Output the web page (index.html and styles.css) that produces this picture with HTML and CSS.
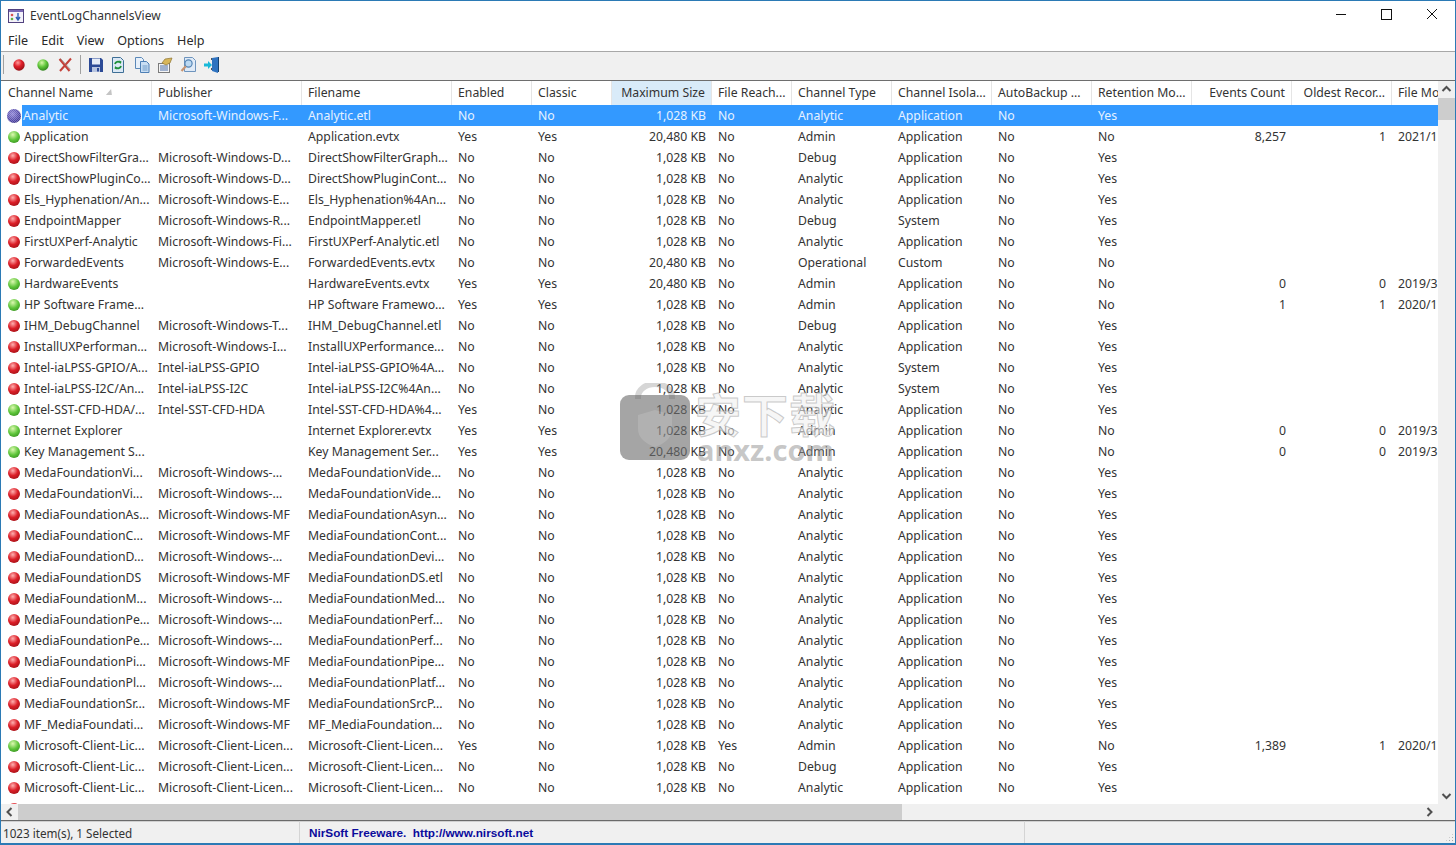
FILE: index.html
```html
<!DOCTYPE html>
<html lang="en">
<head>
<meta charset="utf-8">
<title>EventLogChannelsView</title>
<link rel="stylesheet" href="styles.css">
</head>
<body>
<div class="window">
  <header class="titlebar">
    <svg class="appicon" width="16" height="14" viewBox="0 0 16 14"><rect x="0.5" y="0.5" width="15" height="13" fill="#f4f2fa" stroke="#51427f"/><rect x="1" y="1" width="14" height="2" fill="#7a68b5"/><circle cx="4" cy="6" r="1.3" fill="#d9534f"/><circle cx="4" cy="10" r="1.3" fill="#65b045"/><path d="M10 4v6M8 8l2 3 2-3" fill="none" stroke="#2f5fb3" stroke-width="1.4"/></svg>
    <span class="apptitle">EventLogChannelsView</span>
    <div class="wincontrols">
      <svg width="46" height="30" viewBox="0 0 46 30"><path d="M19 14.5h10" stroke="#111" fill="none"/></svg>
      <svg width="46" height="30" viewBox="0 0 46 30"><rect x="18.5" y="9.5" width="10" height="10" stroke="#111" fill="none"/></svg>
      <svg width="46" height="30" viewBox="0 0 46 30"><path d="M18 9l10 10M28 9L18 19" stroke="#111" fill="none"/></svg>
    </div>
  </header>
  <nav class="menubar"><span>File</span><span>Edit</span><span>View</span><span>Options</span><span>Help</span></nav>
  <div class="toolbar">
    <i class="tsep first"></i>
    <svg class="tool m8" width="16" height="16" viewBox="0 0 16 16"><defs><radialGradient id="tr" cx="40%" cy="30%" r="75%"><stop offset="0" stop-color="#ff9a9a"/><stop offset=".45" stop-color="#e0202a"/><stop offset="1" stop-color="#8e0c12"/></radialGradient><radialGradient id="tg" cx="40%" cy="30%" r="75%"><stop offset="0" stop-color="#d6f7a8"/><stop offset=".5" stop-color="#5fc63a"/><stop offset="1" stop-color="#2c7d1a"/></radialGradient></defs><circle cx="8" cy="8" r="5.7" fill="url(#tr)"/></svg>
    <svg class="tool m6" width="16" height="16" viewBox="0 0 16 16"><circle cx="8" cy="8" r="5.7" fill="url(#tg)"/></svg>
    <svg class="tool m0" width="16" height="16" viewBox="0 0 16 16"><path d="M2.500 2l10 12M14 1.500L3 14" stroke="#c4413a" stroke-width="2" fill="none"/><path d="M3.500 1.500l10 11" stroke="#8f7f7a" stroke-width=".7" fill="none"/></svg>
    <i class="tsep"></i>
    <svg class="tool m6" width="16" height="16" viewBox="0 0 16 16"><path d="M1 1h12l2 2v12H1z" fill="#2c4a96"/><rect x="4" y="1.500" width="8" height="6" fill="#e6ecf7"/><rect x="4" y="10" width="8" height="5" fill="#b8c5e0"/><rect x="9" y="11" width="2" height="3.500" fill="#2c4a96"/></svg>
    <svg class="tool m8" width="16" height="16" viewBox="0 0 16 16"><path d="M2.500 .5h8l3 3v12h-11z" fill="#dbe8f5" stroke="#3e6f96"/><path d="M5 7a3 3 0 0 1 5-1.500M11 9a3 3 0 0 1-5 1.500" fill="none" stroke="#1e8f38" stroke-width="1.800"/><path d="M9 3.500l2.500 1-.8 2.700zM7 12.500l-2.500-1 .8-2.700z" fill="#1e8f38"/></svg>
    <svg class="tool" width="16" height="16" viewBox="0 0 16 16"><path d="M1.500 .5h6l2 2v9h-8z" fill="#e7f0fa" stroke="#5b88b8"/><path d="M6.500 4.500h6l2.500 2.500v8.500H6.500z" fill="#c9def3" stroke="#4d7fb5"/><path d="M8.500 9h5M8.500 11h5M8.500 13h5" stroke="#6f9bc8"/></svg>
    <svg class="tool" width="16" height="16" viewBox="0 0 16 16"><rect x="1.500" y="6.500" width="11" height="9" fill="#f4f4f4" stroke="#7b7b7b"/><path d="M3 9h8M3 11h8M3 13h8" stroke="#4d6fa8"/><path d="M5 6l3-4 7-1-2 5-4 2z" fill="#d7b65a" stroke="#8e7430" stroke-width=".7"/></svg>
    <svg class="tool m8" width="16" height="16" viewBox="0 0 16 16"><path d="M4.500 .5h8l3 3v11h-11z" fill="#dfeaf7" stroke="#6e94bd"/><circle cx="8.500" cy="6.500" r="3.600" fill="#bcd9f2" stroke="#5585b5" stroke-width="1.200"/><path d="M5.800 9.300L1.500 14" stroke="#c89572" stroke-width="2.200"/></svg>
    <svg class="tool" width="16" height="16" viewBox="0 0 16 16"><path d="M8 1l6-1v16l-6-2z" fill="#2f73c0"/><path d="M14 0h1v15h-1z" fill="#16416f"/><path d="M8 1h-1v2h1zM7 11h1v2H7z" fill="#555"/><path d="M0 6.500h4V4l4 4-4 4V9.500H0z" fill="#18b8d8"/></svg>
  </div>
  <main class="listarea">
    <div class="listview">
      <table class="grid">
        <colgroup><col class="w150"><col class="w150"><col class="w150"><col class="w80"><col class="w80"><col class="w100"><col class="w80"><col class="w100"><col class="w100"><col class="w100"><col class="w100"><col class="w100"><col class="w100"><col class="w100"></colgroup>
        <thead><tr><th class="namehead">Channel Name<span class="sortmark"></span></th><th>Publisher</th><th>Filename</th><th>Enabled</th><th>Classic</th><th class="num sorted">Maximum Size</th><th>File Reach...</th><th>Channel Type</th><th>Channel Isola...</th><th>AutoBackup ...</th><th>Retention Mo...</th><th class="num">Events Count</th><th class="num">Oldest Recor...</th><th>File Modified</th></tr></thead>
        <tbody>
<tr class="sel"><td><div class="name"><b class="dot blue"></b><span>Analytic</span></div></td><td>Microsoft-Windows-F...</td><td>Analytic.etl</td><td>No</td><td>No</td><td class="num">1,028 KB</td><td>No</td><td>Analytic</td><td>Application</td><td>No</td><td>Yes</td><td class="num"></td><td class="num"></td><td></td></tr>
<tr><td><div class="name"><b class="dot green"></b><span>Application</span></div></td><td></td><td>Application.evtx</td><td>Yes</td><td>Yes</td><td class="num">20,480 KB</td><td>No</td><td>Admin</td><td>Application</td><td>No</td><td>No</td><td class="num">8,257</td><td class="num">1</td><td>2021/1</td></tr>
<tr><td><div class="name"><b class="dot red"></b><span>DirectShowFilterGra...</span></div></td><td>Microsoft-Windows-D...</td><td>DirectShowFilterGraph...</td><td>No</td><td>No</td><td class="num">1,028 KB</td><td>No</td><td>Debug</td><td>Application</td><td>No</td><td>Yes</td><td class="num"></td><td class="num"></td><td></td></tr>
<tr><td><div class="name"><b class="dot red"></b><span>DirectShowPluginCo...</span></div></td><td>Microsoft-Windows-D...</td><td>DirectShowPluginCont...</td><td>No</td><td>No</td><td class="num">1,028 KB</td><td>No</td><td>Analytic</td><td>Application</td><td>No</td><td>Yes</td><td class="num"></td><td class="num"></td><td></td></tr>
<tr><td><div class="name"><b class="dot red"></b><span>Els_Hyphenation/An...</span></div></td><td>Microsoft-Windows-E...</td><td>Els_Hyphenation%4An...</td><td>No</td><td>No</td><td class="num">1,028 KB</td><td>No</td><td>Analytic</td><td>Application</td><td>No</td><td>Yes</td><td class="num"></td><td class="num"></td><td></td></tr>
<tr><td><div class="name"><b class="dot red"></b><span>EndpointMapper</span></div></td><td>Microsoft-Windows-R...</td><td>EndpointMapper.etl</td><td>No</td><td>No</td><td class="num">1,028 KB</td><td>No</td><td>Debug</td><td>System</td><td>No</td><td>Yes</td><td class="num"></td><td class="num"></td><td></td></tr>
<tr><td><div class="name"><b class="dot red"></b><span>FirstUXPerf-Analytic</span></div></td><td>Microsoft-Windows-Fi...</td><td>FirstUXPerf-Analytic.etl</td><td>No</td><td>No</td><td class="num">1,028 KB</td><td>No</td><td>Analytic</td><td>Application</td><td>No</td><td>Yes</td><td class="num"></td><td class="num"></td><td></td></tr>
<tr><td><div class="name"><b class="dot red"></b><span>ForwardedEvents</span></div></td><td>Microsoft-Windows-E...</td><td>ForwardedEvents.evtx</td><td>No</td><td>No</td><td class="num">20,480 KB</td><td>No</td><td>Operational</td><td>Custom</td><td>No</td><td>No</td><td class="num"></td><td class="num"></td><td></td></tr>
<tr><td><div class="name"><b class="dot green"></b><span>HardwareEvents</span></div></td><td></td><td>HardwareEvents.evtx</td><td>Yes</td><td>Yes</td><td class="num">20,480 KB</td><td>No</td><td>Admin</td><td>Application</td><td>No</td><td>No</td><td class="num">0</td><td class="num">0</td><td>2019/3</td></tr>
<tr><td><div class="name"><b class="dot green"></b><span>HP Software Frame...</span></div></td><td></td><td>HP Software Framewo...</td><td>Yes</td><td>Yes</td><td class="num">1,028 KB</td><td>No</td><td>Admin</td><td>Application</td><td>No</td><td>No</td><td class="num">1</td><td class="num">1</td><td>2020/1</td></tr>
<tr><td><div class="name"><b class="dot red"></b><span>IHM_DebugChannel</span></div></td><td>Microsoft-Windows-T...</td><td>IHM_DebugChannel.etl</td><td>No</td><td>No</td><td class="num">1,028 KB</td><td>No</td><td>Debug</td><td>Application</td><td>No</td><td>Yes</td><td class="num"></td><td class="num"></td><td></td></tr>
<tr><td><div class="name"><b class="dot red"></b><span>InstallUXPerforman...</span></div></td><td>Microsoft-Windows-I...</td><td>InstallUXPerformance...</td><td>No</td><td>No</td><td class="num">1,028 KB</td><td>No</td><td>Analytic</td><td>Application</td><td>No</td><td>Yes</td><td class="num"></td><td class="num"></td><td></td></tr>
<tr><td><div class="name"><b class="dot red"></b><span>Intel-iaLPSS-GPIO/A...</span></div></td><td>Intel-iaLPSS-GPIO</td><td>Intel-iaLPSS-GPIO%4A...</td><td>No</td><td>No</td><td class="num">1,028 KB</td><td>No</td><td>Analytic</td><td>System</td><td>No</td><td>Yes</td><td class="num"></td><td class="num"></td><td></td></tr>
<tr><td><div class="name"><b class="dot red"></b><span>Intel-iaLPSS-I2C/An...</span></div></td><td>Intel-iaLPSS-I2C</td><td>Intel-iaLPSS-I2C%4An...</td><td>No</td><td>No</td><td class="num">1,028 KB</td><td>No</td><td>Analytic</td><td>System</td><td>No</td><td>Yes</td><td class="num"></td><td class="num"></td><td></td></tr>
<tr><td><div class="name"><b class="dot green"></b><span>Intel-SST-CFD-HDA/...</span></div></td><td>Intel-SST-CFD-HDA</td><td>Intel-SST-CFD-HDA%4...</td><td>Yes</td><td>No</td><td class="num">1,028 KB</td><td>No</td><td>Analytic</td><td>Application</td><td>No</td><td>Yes</td><td class="num"></td><td class="num"></td><td></td></tr>
<tr><td><div class="name"><b class="dot green"></b><span>Internet Explorer</span></div></td><td></td><td>Internet Explorer.evtx</td><td>Yes</td><td>Yes</td><td class="num">1,028 KB</td><td>No</td><td>Admin</td><td>Application</td><td>No</td><td>No</td><td class="num">0</td><td class="num">0</td><td>2019/3</td></tr>
<tr><td><div class="name"><b class="dot green"></b><span>Key Management S...</span></div></td><td></td><td>Key Management Ser...</td><td>Yes</td><td>Yes</td><td class="num">20,480 KB</td><td>No</td><td>Admin</td><td>Application</td><td>No</td><td>No</td><td class="num">0</td><td class="num">0</td><td>2019/3</td></tr>
<tr><td><div class="name"><b class="dot red"></b><span>MedaFoundationVi...</span></div></td><td>Microsoft-Windows-...</td><td>MedaFoundationVide...</td><td>No</td><td>No</td><td class="num">1,028 KB</td><td>No</td><td>Analytic</td><td>Application</td><td>No</td><td>Yes</td><td class="num"></td><td class="num"></td><td></td></tr>
<tr><td><div class="name"><b class="dot red"></b><span>MedaFoundationVi...</span></div></td><td>Microsoft-Windows-...</td><td>MedaFoundationVide...</td><td>No</td><td>No</td><td class="num">1,028 KB</td><td>No</td><td>Analytic</td><td>Application</td><td>No</td><td>Yes</td><td class="num"></td><td class="num"></td><td></td></tr>
<tr><td><div class="name"><b class="dot red"></b><span>MediaFoundationAs...</span></div></td><td>Microsoft-Windows-MF</td><td>MediaFoundationAsyn...</td><td>No</td><td>No</td><td class="num">1,028 KB</td><td>No</td><td>Analytic</td><td>Application</td><td>No</td><td>Yes</td><td class="num"></td><td class="num"></td><td></td></tr>
<tr><td><div class="name"><b class="dot red"></b><span>MediaFoundationC...</span></div></td><td>Microsoft-Windows-MF</td><td>MediaFoundationCont...</td><td>No</td><td>No</td><td class="num">1,028 KB</td><td>No</td><td>Analytic</td><td>Application</td><td>No</td><td>Yes</td><td class="num"></td><td class="num"></td><td></td></tr>
<tr><td><div class="name"><b class="dot red"></b><span>MediaFoundationD...</span></div></td><td>Microsoft-Windows-...</td><td>MediaFoundationDevi...</td><td>No</td><td>No</td><td class="num">1,028 KB</td><td>No</td><td>Analytic</td><td>Application</td><td>No</td><td>Yes</td><td class="num"></td><td class="num"></td><td></td></tr>
<tr><td><div class="name"><b class="dot red"></b><span>MediaFoundationDS</span></div></td><td>Microsoft-Windows-MF</td><td>MediaFoundationDS.etl</td><td>No</td><td>No</td><td class="num">1,028 KB</td><td>No</td><td>Analytic</td><td>Application</td><td>No</td><td>Yes</td><td class="num"></td><td class="num"></td><td></td></tr>
<tr><td><div class="name"><b class="dot red"></b><span>MediaFoundationM...</span></div></td><td>Microsoft-Windows-...</td><td>MediaFoundationMed...</td><td>No</td><td>No</td><td class="num">1,028 KB</td><td>No</td><td>Analytic</td><td>Application</td><td>No</td><td>Yes</td><td class="num"></td><td class="num"></td><td></td></tr>
<tr><td><div class="name"><b class="dot red"></b><span>MediaFoundationPe...</span></div></td><td>Microsoft-Windows-...</td><td>MediaFoundationPerf...</td><td>No</td><td>No</td><td class="num">1,028 KB</td><td>No</td><td>Analytic</td><td>Application</td><td>No</td><td>Yes</td><td class="num"></td><td class="num"></td><td></td></tr>
<tr><td><div class="name"><b class="dot red"></b><span>MediaFoundationPe...</span></div></td><td>Microsoft-Windows-...</td><td>MediaFoundationPerf...</td><td>No</td><td>No</td><td class="num">1,028 KB</td><td>No</td><td>Analytic</td><td>Application</td><td>No</td><td>Yes</td><td class="num"></td><td class="num"></td><td></td></tr>
<tr><td><div class="name"><b class="dot red"></b><span>MediaFoundationPi...</span></div></td><td>Microsoft-Windows-MF</td><td>MediaFoundationPipe...</td><td>No</td><td>No</td><td class="num">1,028 KB</td><td>No</td><td>Analytic</td><td>Application</td><td>No</td><td>Yes</td><td class="num"></td><td class="num"></td><td></td></tr>
<tr><td><div class="name"><b class="dot red"></b><span>MediaFoundationPl...</span></div></td><td>Microsoft-Windows-...</td><td>MediaFoundationPlatf...</td><td>No</td><td>No</td><td class="num">1,028 KB</td><td>No</td><td>Analytic</td><td>Application</td><td>No</td><td>Yes</td><td class="num"></td><td class="num"></td><td></td></tr>
<tr><td><div class="name"><b class="dot red"></b><span>MediaFoundationSr...</span></div></td><td>Microsoft-Windows-MF</td><td>MediaFoundationSrcP...</td><td>No</td><td>No</td><td class="num">1,028 KB</td><td>No</td><td>Analytic</td><td>Application</td><td>No</td><td>Yes</td><td class="num"></td><td class="num"></td><td></td></tr>
<tr><td><div class="name"><b class="dot red"></b><span>MF_MediaFoundati...</span></div></td><td>Microsoft-Windows-MF</td><td>MF_MediaFoundation...</td><td>No</td><td>No</td><td class="num">1,028 KB</td><td>No</td><td>Analytic</td><td>Application</td><td>No</td><td>Yes</td><td class="num"></td><td class="num"></td><td></td></tr>
<tr><td><div class="name"><b class="dot green"></b><span>Microsoft-Client-Lic...</span></div></td><td>Microsoft-Client-Licen...</td><td>Microsoft-Client-Licen...</td><td>Yes</td><td>No</td><td class="num">1,028 KB</td><td>Yes</td><td>Admin</td><td>Application</td><td>No</td><td>No</td><td class="num">1,389</td><td class="num">1</td><td>2020/1</td></tr>
<tr><td><div class="name"><b class="dot red"></b><span>Microsoft-Client-Lic...</span></div></td><td>Microsoft-Client-Licen...</td><td>Microsoft-Client-Licen...</td><td>No</td><td>No</td><td class="num">1,028 KB</td><td>No</td><td>Debug</td><td>Application</td><td>No</td><td>Yes</td><td class="num"></td><td class="num"></td><td></td></tr>
<tr><td><div class="name"><b class="dot red"></b><span>Microsoft-Client-Lic...</span></div></td><td>Microsoft-Client-Licen...</td><td>Microsoft-Client-Licen...</td><td>No</td><td>No</td><td class="num">1,028 KB</td><td>No</td><td>Analytic</td><td>Application</td><td>No</td><td>Yes</td><td class="num"></td><td class="num"></td><td></td></tr>
<tr><td><div class="name"><b class="dot red"></b><span></span></div></td><td></td><td></td><td></td><td></td><td class="num"></td><td></td><td></td><td></td><td></td><td></td><td class="num"></td><td class="num"></td><td></td></tr>
        </tbody>
      </table>
      <div class="watermark">
        <svg class="wm-lock" width="72" height="78" viewBox="0 0 72 78"><path d="M19 16V14a17 13 0 0 1 34 0v2" fill="none" stroke="#8a8a8a" stroke-width="6" opacity=".35"/><rect x="1" y="12" width="70" height="65" rx="9" fill="#6e6e6e" opacity=".62"/><path d="M36 27l17 5v14c0 9-8 15-17 18-9-3-17-9-17-18V32z" fill="#fff" opacity=".14"/></svg>
        <div class="wm-text"><span class="wm-cn">安下载</span><span class="wm-en">anxz.com</span></div>
      </div>
    </div>
    <div class="vscroll">
      <svg class="sbtn" width="17" height="17" viewBox="0 0 17 17"><path d="M4.500 10l4-4 4 4" fill="none" stroke="#505050" stroke-width="2"/></svg>
      <div class="vtrack"><div class="vthumb"></div></div>
      <svg class="sbtn" width="17" height="17" viewBox="0 0 17 17"><path d="M4.500 7l4 4 4-4" fill="none" stroke="#505050" stroke-width="2"/></svg>
    </div>
  </main>
  <div class="hscroll">
    <svg class="sbtn" width="17" height="16" viewBox="0 0 17 16"><path d="M10.500 4l-4 4 4 4" fill="none" stroke="#505050" stroke-width="2"/></svg>
    <div class="htrack"><div class="hthumb"></div></div>
    <svg class="sbtn" width="17" height="16" viewBox="0 0 17 16"><path d="M6.500 4l4 4-4 4" fill="none" stroke="#505050" stroke-width="2"/></svg>
    <div class="corner"></div>
  </div>
  <footer class="statusbar">
    <div class="st-count">1023 item(s), 1 Selected</div>
    <div class="st-link">NirSoft Freeware.&nbsp; http://www.nirsoft.net</div>
    <div class="st-rest"></div>
    <div class="st-grip"></div>
  </footer>
</div>
</body>
</html>
```
FILE: styles.css
```css
* { box-sizing: border-box; }
html, body { margin: 0; padding: 0; height: 100%; overflow: hidden; }
body { font-family: "Noto Sans", "Open Sans", sans-serif; font-size: 12.25px; color: #2a2a2a; background: #fff; }
.window { width: 1456px; height: 845px; display: flex; flex-direction: column; border: 1px solid #2b7ab5; border-bottom-width: 2px; background: #fff; }

.titlebar { height: 30px; display: flex; align-items: center; padding: 0 0 1px 7px; flex: none; }
.appicon { margin-right: 6px; }
.apptitle { font-size: 12px; color: #333; }
.wincontrols { margin: -1px 0 0 auto; display: flex; }
.wincontrols svg { display: block; }

.menubar { height: 21px; display: flex; gap: 13px; align-items: center; padding: 0 0 1px 7px; flex: none; border-bottom: 1px solid #a8a8a8; font-size: 12.6px; }

.toolbar { height: 29px; flex: none; display: flex; align-items: center; padding: 0 0 3px 1px; background: #f0f0f0; border-bottom: 1px solid #6e6e6e; }
.tsep { width: 1px; height: 19px; background: #a0a0a0; margin: 0 7px; display: block; }
.tsep.first { margin: 0 7px 0 1px; }
.tool { display: block; margin-right: 7px; }
.tool.m8 { margin-right: 8px; }
.tool.m6 { margin-right: 6px; }
.tool.m0 { margin-right: 0; }

.listarea { flex: 1; min-height: 0; display: flex; }
.listview { flex: 1; min-width: 0; position: relative; overflow: hidden; padding-left: 1px; }
.grid { border-collapse: separate; border-spacing: 0; table-layout: fixed; width: 1470px; }
.w150 { width: 150px; }
.w80 { width: 80px; }
.w100 { width: 100px; }
.grid th { height: 24px; font-weight: 400; text-align: left; padding: 0 6px 2px 6px; border-right: 1px solid #e5e5e5; white-space: nowrap; overflow: hidden; color: #333; }
.grid td { height: 21px; padding: 0 6px; white-space: nowrap; overflow: hidden; color: #333; }
.grid .num { text-align: right; }
.grid th.sorted { background: #d9ebf9; }
.namehead { position: relative; }
.sortmark { position: absolute; left: 105px; top: 8px; width: 0; height: 0; border-left: 3px solid transparent; border-right: 3px solid transparent; border-bottom: 6px solid #c4c4c4; transform: skewX(-20deg); }
.grid .sel td { background: #3399ff; color: #e6f2ff; }
.grid .sel td:first-child { background: #fff; }
.grid td:first-child { padding: 0; }
.name { display: flex; align-items: center; height: 21px; padding-left: 6px; }
.name span { flex: 1; height: 21px; line-height: 21px; padding-left: 2px; }
.sel .name { padding-left: 5px; }
.sel .name span { background: #3399ff; color: #e6f2ff; padding-left: 1px; }
.dot { display: block; flex: none; width: 12px; height: 12px; border-radius: 50%; margin-right: 2px; }
.red { background: radial-gradient(circle at 40% 30%, #ffb0b0 0, #dc1f28 45%, #8a0b10 100%); }
.green { background: radial-gradient(circle at 40% 30%, #dcf8b0 0, #5cc438 50%, #2a7c18 100%); }
.blue { width: 14px; height: 14px; margin-right: 1px; background: repeating-conic-gradient(rgba(255,255,255,.28) 0 25%, transparent 0 50%) 0 0 / 2px 2px, radial-gradient(circle at 40% 35%, #8f86d8 0, #4a3fa0 60%, #33336e 100%); }

.watermark { position: absolute; left: 618px; top: 302px; display: flex; gap: 4px; pointer-events: none; }
.wm-lock { display: block; }
.wm-text { display: flex; flex-direction: column; align-items: center; padding-top: 3px; }
.wm-cn { font-family: "Noto Sans CJK SC", sans-serif; font-weight: 700; font-size: 46px; line-height: 52px; letter-spacing: 1px; color: rgba(240,240,240,.6); -webkit-text-stroke: 1px rgba(170,170,170,.6); }
.wm-en { font-family: "Noto Sans", sans-serif; font-weight: 700; font-size: 29px; line-height: 24px; color: rgba(150,150,150,.55); }

.vscroll { width: 17px; flex: none; display: flex; flex-direction: column; background: #f0f0f0; }
.sbtn { display: block; flex: none; }
.vtrack { flex: 1; min-height: 0; }
.vthumb { height: 22px; background: #cdcdcd; }

.hscroll { height: 16px; flex: none; display: flex; background: #f0f0f0; }
.htrack { flex: 1; min-width: 0; }
.hthumb { width: 884px; height: 16px; background: #cdcdcd; }
.corner { width: 17px; flex: none; }

.statusbar { height: 23px; flex: none; display: flex; align-items: stretch; background: #f0f0f0; border-top: 1px solid #6a6a6a; box-shadow: inset 0 1px 0 #d0d0d0; position: relative; }
.statusbar > div { display: flex; align-items: center; }
.st-count { width: 299px; padding: 1px 0 0 2px; border-right: 1px solid #d4d4d4; font-size: 11.7px; color: #333; }
.st-link { width: 725px; padding-left: 9px; border-right: 1px solid #d4d4d4; color: #0b0b9c; font-family: "Liberation Sans", sans-serif; font-weight: 700; font-size: 11.75px; }
.st-rest { flex: 1; }
.st-grip { position: absolute; right: 1px; bottom: 1px; width: 9px; height: 9px; background: radial-gradient(circle, #a8a8a8 1px, transparent 1px) 0 0 / 3px 3px; clip-path: polygon(100% 0, 100% 100%, 0 100%); }
```
